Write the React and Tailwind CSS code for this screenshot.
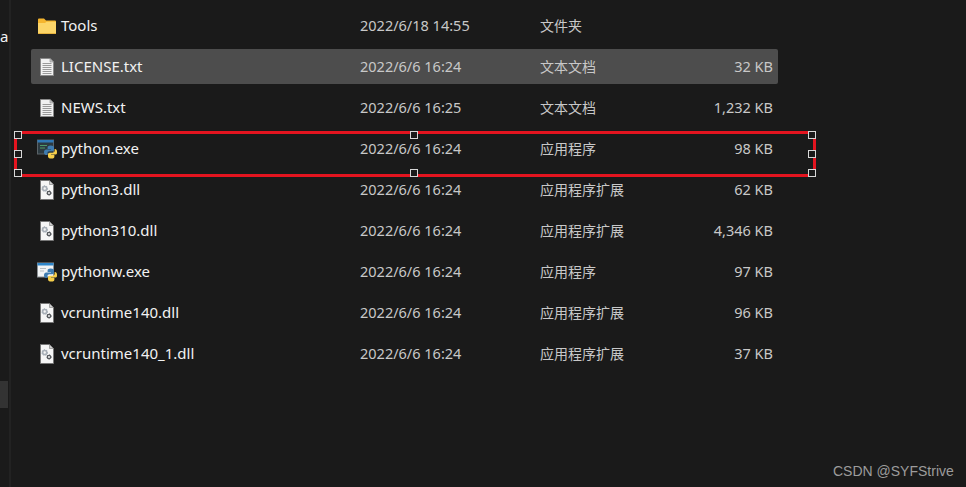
const FONT = { fontFamily: '"Noto Sans", "Noto Sans CJK SC", sans-serif' };

const FILES = [
  { name: "Tools", date: "2022/6/18 14:55", type: "文件夹", size: "", icon: "folder" },
  { name: "LICENSE.txt", date: "2022/6/6 16:24", type: "文本文档", size: "32 KB", icon: "txt", selected: true },
  { name: "NEWS.txt", date: "2022/6/6 16:25", type: "文本文档", size: "1,232 KB", icon: "txt" },
  { name: "python.exe", date: "2022/6/6 16:24", type: "应用程序", size: "98 KB", icon: "exe" },
  { name: "python3.dll", date: "2022/6/6 16:24", type: "应用程序扩展", size: "62 KB", icon: "dll" },
  { name: "python310.dll", date: "2022/6/6 16:24", type: "应用程序扩展", size: "4,346 KB", icon: "dll" },
  { name: "pythonw.exe", date: "2022/6/6 16:24", type: "应用程序", size: "97 KB", icon: "exew" },
  { name: "vcruntime140.dll", date: "2022/6/6 16:24", type: "应用程序扩展", size: "96 KB", icon: "dll" },
  { name: "vcruntime140_1.dll", date: "2022/6/6 16:24", type: "应用程序扩展", size: "37 KB", icon: "dll" },
];

function FolderIcon() {
  return (
    <svg width="20" height="20" viewBox="0 0 20 20">
      <path d="M1 3.5 A1 1 0 0 1 2 2.5 H7 L9 4.5 H18 A1 1 0 0 1 19 5.5 V8 H1 Z" fill="#f5b52e" />
      <path d="M1 7 L8 7 L9.5 5.8 H19 V17 A1 1 0 0 1 18 18 H2 A1 1 0 0 1 1 17 Z" fill="#fcd568" />
      <rect x="1" y="17" width="18" height="1" fill="#e6b23e" />
    </svg>
  );
}

function TxtIcon() {
  return (
    <svg width="20" height="20" viewBox="0 0 20 20">
      <path d="M3.5 1.5 H13 L16.5 5 V18.5 H3.5 Z" fill="#f1f1f1" stroke="#8a8a8a" />
      <path d="M13 1.5 V5 H16.5 Z" fill="#c9c9c9" stroke="#8a8a8a" strokeWidth="0.6" />
      {[6, 8, 10, 12, 14, 16].map((y) => (
        <rect key={y} x="5.5" y={y} width="9" height="1" fill="#9a9a9a" />
      ))}
    </svg>
  );
}

function Gear({ cx, cy, r, color }) {
  return (
    <g>
      <circle cx={cx} cy={cy} r={r * 0.68} fill="none" stroke={color} strokeWidth={r * 0.55} />
      <circle cx={cx} cy={cy} r={r * 0.9} fill="none" stroke={color} strokeWidth={r * 0.35} strokeDasharray="1.2 1.1" />
    </g>
  );
}

function DllIcon() {
  return (
    <svg width="20" height="20" viewBox="0 0 20 20">
      <path d="M3.5 0.5 H12.5 L16.5 4.5 V19.5 H3.5 Z" fill="#f6f6f6" stroke="#777777" />
      <path d="M12.5 0.5 V4.5 H16.5 Z" fill="#cfcfcf" stroke="#777777" strokeWidth="0.6" />
      <Gear cx={7.7} cy={8.5} r={3} color="#a9b0b8" />
      <Gear cx={12} cy={13} r={2.4} color="#55585c" />
    </svg>
  );
}

function PythonLogo() {
  return (
    <g>
      <path d="M13.8 6.5 C11 6.5 10.6 7.5 10.6 8.6 V10 H14 V10.6 H9.2 C8 10.6 7 11.5 7 13.3 C7 15.1 7.9 16 9 16 H10.4 V14.2 C10.4 13 11.3 12.2 12.4 12.2 H15.2 C16.2 12.2 17 11.5 17 10.5 V8.6 C17 7.4 15.9 6.5 13.8 6.5 Z" fill="#3f7cb0" />
      <path d="M14.2 19.5 C17 19.5 17.4 18.5 17.4 17.4 V16 H14 V15.4 H18.8 C20 15.4 20 14.5 20 12.7 C20 10.9 19.1 10 18 10 H17.6 V11.8 C17.6 13 16.7 13.8 15.6 13.8 H12.8 C11.8 13.8 11 14.5 11 15.5 V17.4 C11 18.6 12.1 19.5 14.2 19.5 Z" fill="#f6cf4b" />
    </g>
  );
}

function ExeIcon() {
  return (
    <svg width="20" height="20" viewBox="0 0 20 20" className="overflow-visible">
      <rect x="0.5" y="1" width="16" height="14" fill="#2c3a41" stroke="#5a6368" />
      <rect x="0.5" y="1" width="16" height="2.5" fill="#2f78b5" />
      <rect x="3" y="6" width="7" height="1" fill="#4f9a6b" />
      <rect x="3" y="8.5" width="5" height="1" fill="#4f9a6b" />
      <PythonLogo />
    </svg>
  );
}

function ExewIcon() {
  return (
    <svg width="20" height="20" viewBox="0 0 20 20" className="overflow-visible">
      <rect x="0.5" y="1" width="16" height="14" fill="#f2f4f5" stroke="#8b9094" />
      <rect x="0.5" y="1" width="16" height="2.5" fill="#2f86c9" />
      <rect x="3" y="6" width="6" height="1" fill="#b8bec2" />
      <rect x="3" y="8.5" width="4" height="1" fill="#b8bec2" />
      <PythonLogo />
    </svg>
  );
}

const ICONS = { folder: FolderIcon, txt: TxtIcon, dll: DllIcon, exe: ExeIcon, exew: ExewIcon };

function FileRow({ file }) {
  const Icon = ICONS[file.icon];
  return (
    <div
      className={`grid h-[35px] grid-cols-[30px_299px_180px_1fr] items-center rounded-[2px] pr-[5px] text-[15px] ${
        file.selected ? "bg-[#4d4d4d]" : ""
      }`}
    >
      <div className="flex justify-center pl-[1px]">
        <Icon />
      </div>
      <div className="text-[#f2f2f2]">{file.name}</div>
      <div className="text-[14.5px] text-[#c8c8c8]">{file.date}</div>
      <div className="flex justify-between text-[#c8c8c8]">
        <span className="text-[14px]">{file.type}</span>
        <span className="text-[14.5px]">{file.size}</span>
      </div>
    </div>
  );
}

function Handle({ className }) {
  return <div className={`absolute h-[8px] w-[8px] border border-[#d8d8d8] bg-[#1a1a1a] ${className}`} />;
}

export default function App() {
  return (
    <div className="relative flex h-[487px] w-[966px] overflow-hidden bg-[#1a1a1a]" style={FONT}>
      <div className="flex w-[9px] flex-col">
        <div className="mt-[26px] text-[15px] leading-[20px] text-[#f2f2f2]">a</div>
        <div className="mt-[335px] h-[27px] w-[8px] bg-[#333333]" />
      </div>
      <div className="w-[2px] bg-[#222222]" />
      <div className="ml-[20px] flex w-[747px] flex-col gap-[6px] pt-[8px]">
        {FILES.map((file) => (
          <FileRow key={file.name} file={file} />
        ))}
      </div>

      {/* annotation drawn over the screenshot */}
      <div className="absolute left-[14px] top-[131px] h-[46px] w-[802px] border-[3px] border-[#e3141f]">
        <Handle className="-left-[3px] -top-[3px]" />
        <Handle className="left-[393px] -top-[3px]" />
        <Handle className="-right-[3px] -top-[3px]" />
        <Handle className="-left-[3px] top-[16px]" />
        <Handle className="-right-[3px] top-[16px]" />
        <Handle className="-bottom-[3px] -left-[3px]" />
        <Handle className="-bottom-[3px] left-[393px]" />
        <Handle className="-bottom-[3px] -right-[3px]" />
      </div>

      <div className="absolute left-[833px] top-[462px] font-['Liberation_Sans',sans-serif] text-[14px] leading-[18px] text-[#9c9c9c]">
        CSDN @SYFStrive
      </div>
    </div>
  );
}
